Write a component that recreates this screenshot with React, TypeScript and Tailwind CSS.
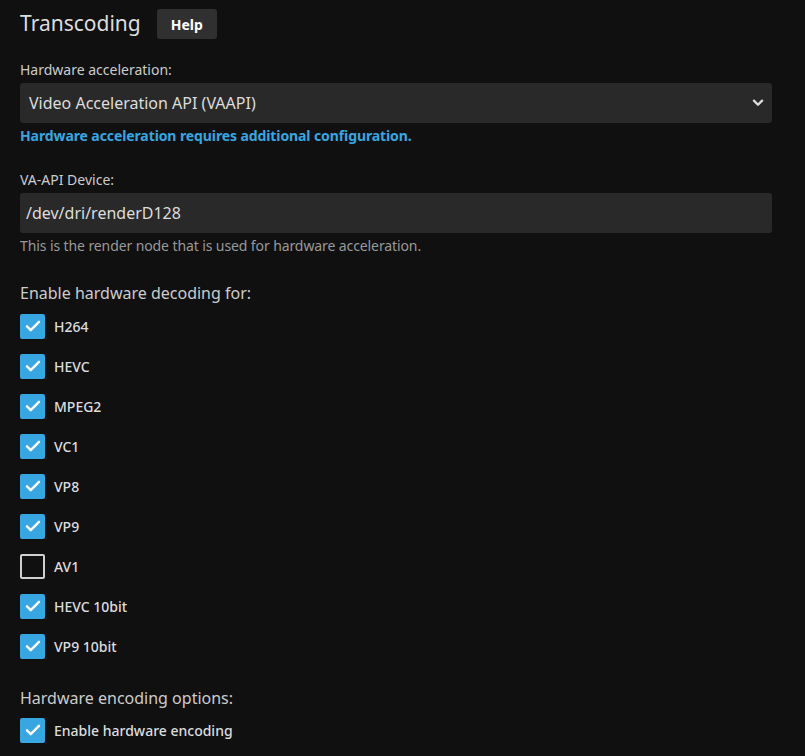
import React from "react";

const Check = ({ checked, label }: { checked: boolean; label: string }) => (
  <div className="flex items-center h-10">
    {checked ? (
      <div className="w-[25px] h-[25px] rounded-[2px] bg-[#38a6e0] flex items-center justify-center">
        <svg width="18" height="18" viewBox="0 0 24 24" fill="none" stroke="white" strokeWidth="3.2" strokeLinecap="round" strokeLinejoin="round">
          <path d="M4 12.5l5 5L20 6.5" />
        </svg>
      </div>
    ) : (
      <div className="w-[25px] h-[25px] rounded-[2px] border-2 border-[#cfcfcf]" />
    )}
    <span className="ml-[9px] text-[14px] font-medium text-[#dddddd]">{label}</span>
  </div>
);

export default function App() {
  const decoders: [string, boolean][] = [
    ["H264", true],
    ["HEVC", true],
    ["MPEG2", true],
    ["VC1", true],
    ["VP8", true],
    ["VP9", true],
    ["AV1", false],
    ["HEVC 10bit", true],
    ["VP9 10bit", true],
  ];
  return (
    <div className="min-h-[756px] bg-[#101010] pl-5 pr-[33px] pt-[9px] text-[#dddddd]" style={{ fontFamily: '"Noto Sans", sans-serif' }}>
      <div className="flex items-center h-[30px]">
        <h2 className="text-[21px] font-normal text-[#dddddd]">Transcoding</h2>
        <button className="ml-[16px] h-[30px] w-[60px] rounded-[3px] bg-[#303030] text-[14px] font-bold text-white">Help</button>
      </div>
      <div className="mt-[21px] text-[14px] text-[#cccccc] leading-5">Hardware acceleration:</div>
      <div className="mt-[3px] h-10 rounded-[3px] bg-[#292929] flex items-center pl-[9px] pr-[7px] justify-between">
        <span className="text-[16px] text-[#dddddd]">Video Acceleration API (VAAPI)</span>
        <svg width="14" height="14" viewBox="0 0 24 24" fill="none" stroke="#dddddd" strokeWidth="4" strokeLinecap="round" strokeLinejoin="round">
          <path d="M5 8l7 7 7-7" />
        </svg>
      </div>
      <div className="mt-[3px] text-[14px] font-bold text-[#38a6e0] leading-5 tracking-[-0.1px]">Hardware acceleration requires additional configuration.</div>
      <div className="mt-[24px] text-[14px] text-[#cccccc] leading-5">VA-API Device:</div>
      <div className="mt-[3px] h-10 rounded-[3px] bg-[#292929] flex items-center px-[6px]">
        <span className="text-[16px] text-[#dddddd]">/dev/dri/renderD128</span>
      </div>
      <div className="mt-[3px] text-[14px] text-[#999999] leading-5 tracking-[-0.1px]">This is the render node that is used for hardware acceleration.</div>
      <div className="mt-[25px] text-[16px] text-[#cccccc] leading-6">Enable hardware decoding for:</div>
      <div className="mt-[1px] flex flex-col">
        {decoders.map(([l, c]) => (
          <Check key={l} checked={c} label={l} />
        ))}
      </div>
      <div className="mt-[20px] text-[16px] text-[#cccccc] leading-6">Hardware encoding options:</div>
      <div>
        <Check checked={true} label="Enable hardware encoding" />
      </div>
    </div>
  );
}
